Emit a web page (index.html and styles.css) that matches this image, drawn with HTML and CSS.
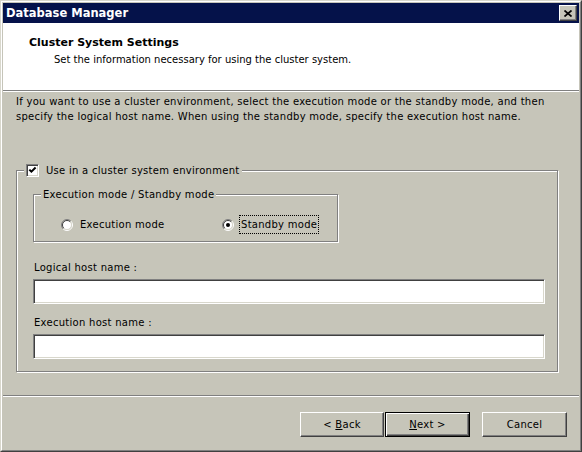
FILE: index.html
```html
<!DOCTYPE html>
<html lang="en">
<head>
    <meta charset="UTF-8">
    <title>Database Manager</title>
    <link rel="stylesheet" href="styles.css">
</head>
<body>
    <div class="window">
        <div class="frame">
            <!-- Title bar -->
            <div class="titlebar">
                <span class="title">Database Manager</span>
                <span class="close">
                    <svg width="8" height="7" viewBox="0 0 8 7">
                        <path d="M0.5 0.5 L7.5 6.5 M7.5 0.5 L0.5 6.5" stroke="#000" stroke-width="1.7" fill="none"/>
                    </svg>
                </span>
            </div>

            <!-- Wizard header -->
            <div class="header">
                <div class="heading">Cluster System Settings</div>
                <div class="subheading">Set the information necessary for using the cluster system.</div>
            </div>

            <div class="body">
                <p class="intro">If you want to use a cluster environment, select the execution mode or the standby mode, and then<br>specify the logical host name. When using the standby mode, specify the execution host name.</p>

                <fieldset class="group outer">
                    <legend>
                        <span class="check">
                            <svg width="9" height="9" viewBox="0 0 9 9">
                                <path d="M1.3 3.6 L3.4 5.7 L7.6 1.5" stroke="#000" stroke-width="2" fill="none"/>
                            </svg>
                        </span>
                        <span>Use in a cluster system environment</span>
                    </legend>

                    <fieldset class="group inner">
                        <legend>Execution mode / Standby mode</legend>
                        <div class="radios">
                            <div class="radio">
                                <svg width="12" height="12" viewBox="0 0 12 12">
                                    <circle cx="6" cy="6" r="4.5" fill="#fff"/>
                                    <path d="M9.9 2.1 A5.5 5.5 0 0 0 2.1 9.9" stroke="#808080" fill="none"/>
                                    <path d="M2.1 9.9 A5.5 5.5 0 0 0 9.9 2.1" stroke="#fff" fill="none"/>
                                    <path d="M9.2 2.8 A4.5 4.5 0 0 0 2.8 9.2" stroke="#404040" fill="none"/>
                                    <path d="M2.8 9.2 A4.5 4.5 0 0 0 9.2 2.8" stroke="#d8d7cc" fill="none"/>
                                </svg>
                                <span class="text">Execution mode</span>
                            </div>
                            <div class="radio">
                                <svg width="12" height="12" viewBox="0 0 12 12">
                                    <circle cx="6" cy="6" r="4.5" fill="#fff"/>
                                    <path d="M9.9 2.1 A5.5 5.5 0 0 0 2.1 9.9" stroke="#808080" fill="none"/>
                                    <path d="M2.1 9.9 A5.5 5.5 0 0 0 9.9 2.1" stroke="#fff" fill="none"/>
                                    <path d="M9.2 2.8 A4.5 4.5 0 0 0 2.8 9.2" stroke="#404040" fill="none"/>
                                    <path d="M2.8 9.2 A4.5 4.5 0 0 0 9.2 2.8" stroke="#d8d7cc" fill="none"/>
                                    <circle cx="6" cy="6" r="2" fill="#000"/>
                                </svg>
                                <span class="text focus">Standby mode</span>
                            </div>
                        </div>
                    </fieldset>

                    <div class="label first">Logical host name :</div>
                    <div class="textbox"></div>

                    <div class="label">Execution host name :</div>
                    <div class="textbox"></div>
                </fieldset>
            </div>

            <!-- Buttons -->
            <div class="footer">
                <button class="btn back">&lt; <u>B</u>ack</button>
                <button class="btn default"><u>N</u>ext &gt;</button>
                <button class="btn cancel">Cancel</button>
            </div>
        </div>
    </div>
</body>
</html>
```

FILE: styles.css
```css
body {
    margin: 0;
    font-family: "DejaVu Sans", "Liberation Sans", sans-serif;
    font-size: 10px;
    letter-spacing: 0.28px;
    color: #000;
    background-color: #c6c5b9;
}

.window {
    width: 582px;
    height: 452px;
    box-sizing: border-box;
    border: 1px solid;
    border-color: #d8d7cc #404040 #404040 #d8d7cc;
}

.frame {
    height: 100%;
    box-sizing: border-box;
    border: 1px solid;
    border-color: #fff #808080 #808080 #fff;
    padding: 1px;
    display: flex;
    flex-direction: column;
    background-color: #c6c5b9;
}

/* Title bar */
.titlebar {
    flex: none;
    height: 20px;
    display: flex;
    align-items: center;
    justify-content: space-between;
    padding: 0 2px 0 3px;
    background-color: #05124a;
    color: #fff;
}

.title {
    font-weight: bold;
    font-size: 11.5px;
    letter-spacing: 0;
}

.close {
    width: 18px;
    height: 16px;
    box-sizing: border-box;
    display: flex;
    align-items: center;
    justify-content: center;
    background-color: #c6c5b9;
    border: 1px solid;
    border-color: #fff #404040 #404040 #fff;
    box-shadow: inset -1px -1px 0 #808080;
}

/* White header */
.header {
    flex: none;
    height: 68px;
    box-sizing: border-box;
    padding: 13px 0 0 26px;
    background-color: #fff;
    border-bottom: 1px solid #808080;
}

.heading {
    font-weight: bold;
    font-size: 11px;
    line-height: 14px;
    letter-spacing: 0;
}

.subheading {
    margin-top: 3px;
    padding-left: 25px;
    line-height: 14px;
    letter-spacing: 0;
}

/* Main area */
.body {
    flex: 1;
    border-top: 1px solid #fff;
    padding: 2px 0 0 13px;
}

.intro {
    margin: 0;
    line-height: 15px;
    white-space: nowrap;
}

.group {
    margin: 0;
    min-width: 0;
    box-sizing: border-box;
    border: 1px solid #808080;
    box-shadow: inset 1px 1px 0 #fff, 1px 1px 0 #fff;
}

.group legend {
    line-height: 13px;
    background-color: #c6c5b9;
}

.outer {
    margin: 40px 21px 0 0;
    padding: 11px 12px 12px 16px;
}

.outer > legend {
    display: flex;
    align-items: center;
    gap: 7px;
    height: 13px;
    margin-left: -9px;
    padding: 0 3px 0 2px;
}

.check {
    width: 13px;
    height: 13px;
    box-sizing: border-box;
    display: flex;
    align-items: center;
    justify-content: center;
    background-color: #fff;
    border: 1px solid;
    border-color: #808080 #fff #fff #808080;
    box-shadow: inset 1px 1px 0 #404040, inset -1px -1px 0 #d8d7cc;
}

.inner {
    width: 305px;
    padding: 14px 7px 7px 7px;
}

.inner > legend {
    padding: 0 2px;
}

.radios {
    display: flex;
    align-items: center;
    height: 19px;
    padding-left: 20px;
}

.radio {
    display: flex;
    align-items: center;
    gap: 5px;
}

.radio:first-child {
    flex: none;
    width: 161px;
}

.radio .text {
    padding: 2px 1px;
    border: 1px dotted transparent;
    line-height: 13px;
}

.radio .focus {
    border-color: #000;
}

.label {
    margin: 12px 0 5px 1px;
    line-height: 13px;
}

.label.first {
    margin-top: 19px;
}

.textbox {
    height: 25px;
    box-sizing: border-box;
    background-color: #fff;
    border: 1px solid;
    border-color: #808080 #fff #fff #808080;
    box-shadow: inset 1px 1px 0 #404040, inset -1px -1px 0 #d8d7cc;
}

/* Bottom buttons */
.footer {
    flex: none;
    height: 54px;
    box-sizing: border-box;
    display: flex;
    justify-content: flex-end;
    align-items: flex-start;
    padding: 16px 12px 0 0;
    border-top: 1px solid #808080;
    box-shadow: inset 0 1px 0 #fff;
}

.btn {
    width: 85px;
    height: 25px;
    box-sizing: border-box;
    padding: 0;
    font: inherit;
    letter-spacing: inherit;
    color: #000;
    background-color: #c6c5b9;
    border: 1px solid;
    border-color: #fff #404040 #404040 #fff;
    box-shadow: inset -1px -1px 0 #808080;
}

.btn.back {
    width: 84px;
    margin-right: 1px;
}

.btn.default {
    border-color: #000;
    box-shadow: inset 1px 1px 0 #fff, inset -1px -1px 0 #404040, inset -2px -2px 0 #808080;
}

.btn.cancel {
    margin-left: 12px;
}
```
